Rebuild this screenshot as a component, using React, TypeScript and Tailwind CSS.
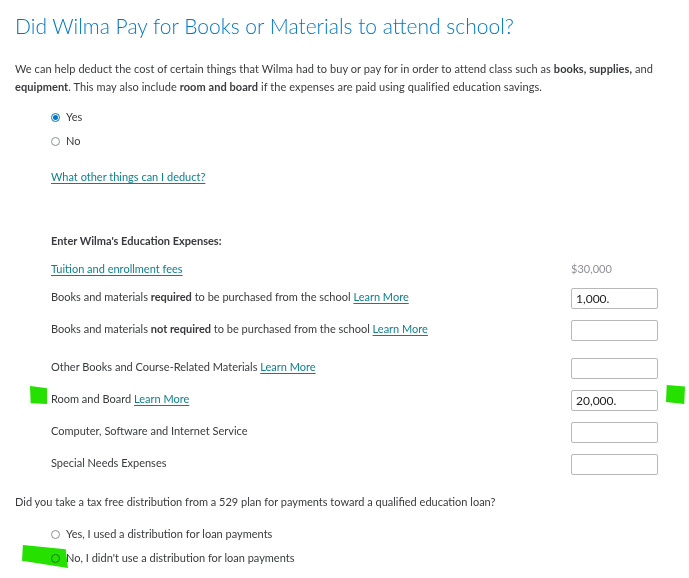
import React from 'react';

const link = 'text-[#0d7f8f] underline underline-offset-2 decoration-[#0d7f8f]';

function Radio({ checked, label }: { checked?: boolean; label: string }) {
  return (
    <div className="flex h-[18px] items-center">
      <span className="ml-[51px] flex h-[9px] w-[9px] items-center justify-center">
        <span
          className={
            checked
              ? 'flex h-[9px] w-[9px] items-center justify-center rounded-full border border-[#0077c5]'
              : 'h-[9px] w-[9px] rounded-full border border-[#8d9096]'
          }
        >
          {checked && <span className="h-[5px] w-[5px] rounded-full bg-[#0077c5]" />}
        </span>
      </span>
      <span className="ml-[6px]">{label}</span>
    </div>
  );
}

function ExpenseRow({ children, value, mt }: { children: React.ReactNode; value?: string; mt: string }) {
  return (
    <div className={`flex h-[21px] w-[658px] items-center justify-between pl-[51px] ${mt}`}>
      <span className="mb-[4px]">{children}</span>
      <div className="flex h-[21px] w-[87px] items-center rounded-[2px] border border-[#b8b8b8] bg-white pl-[4px] text-[12px] text-[#222]">
        {value}
      </div>
    </div>
  );
}

function Highlight({ className, points }: { className: string; points: string }) {
  return (
    <svg className={`absolute mix-blend-multiply ${className}`} viewBox="0 0 100 100" preserveAspectRatio="none">
      <polygon points={points} fill="#26e000" />
    </svg>
  );
}

export default function App() {
  return (
    <div className="relative h-[578px] w-[689px] overflow-hidden bg-white font-['Lato',sans-serif] text-[11px] leading-[18px] text-[#393a3d]">
      <div className="pt-[13px]">
        <h1 className="pl-[15px] text-[21px] font-light leading-[26px] text-[#0077c5]">
          Did Wilma Pay for Books or Materials to attend school?
        </h1>

        <p className="mt-[21px] w-[680px] pl-[15px] tracking-[0.006em]">
          We can help deduct the cost of certain things that Wilma had to buy or pay for in order to attend class such as{' '}
          <b>books, supplies,</b> and <b>equipment</b>. This may also include <b>room and board</b> if the expenses are
          paid using qualified education savings.
        </p>

        <div className="mt-[12px] flex flex-col gap-[6px]">
          <Radio checked label="Yes" />
          <Radio label="No" />
        </div>

        <div className="mt-[18px] pl-[51px]">
          <a className={link}>What other things can I deduct?</a>
        </div>

        <div className="mt-[46px] pl-[51px] font-bold">Enter Wilma's Education Expenses:</div>

        <div className="mt-[10px] flex w-[658px] justify-between pl-[51px]">
          <a className={link}>Tuition and enrollment fees</a>
          <span className="w-[87px] text-[#8d9096]">$30,000</span>
        </div>

        <ExpenseRow mt="mt-[10px]" value="1,000.">
          Books and materials <b>required</b> to be purchased from the school <a className={link}>Learn More</a>
        </ExpenseRow>
        <ExpenseRow mt="mt-[11px]">
          Books and materials <b>not required</b> to be purchased from the school <a className={link}>Learn More</a>
        </ExpenseRow>
        <ExpenseRow mt="mt-[17px]">
          Other Books and Course-Related Materials <a className={link}>Learn More</a>
        </ExpenseRow>
        <ExpenseRow mt="mt-[11px]" value="20,000.">
          Room and Board <a className={link}>Learn More</a>
        </ExpenseRow>
        <ExpenseRow mt="mt-[11px]">Computer, Software and Internet Service</ExpenseRow>
        <ExpenseRow mt="mt-[11px]">Special Needs Expenses</ExpenseRow>

        <p className="mt-[18px] pl-[15px]">
          Did you take a tax free distribution from a 529 plan for payments toward a qualified education loan?
        </p>

        <div className="mt-[14px] flex flex-col gap-[6px]">
          <Radio label="Yes, I used a distribution for loan payments" />
          <Radio label="No, I didn't use a distribution for loan payments" />
        </div>
      </div>

      {/* highlighter marks */}
      <Highlight className="left-[30px] top-[386px] h-[18px] w-[17px]" points="0,0 70,8 100,12 100,100 4,96" />
      <Highlight className="left-[666px] top-[385px] h-[19px] w-[19px]" points="4,0 100,8 96,100 0,90" />
      <Highlight className="left-[22px] top-[545px] h-[23px] w-[46px]" points="2,0 95,18 100,100 0,68" />
    </div>
  );
}
